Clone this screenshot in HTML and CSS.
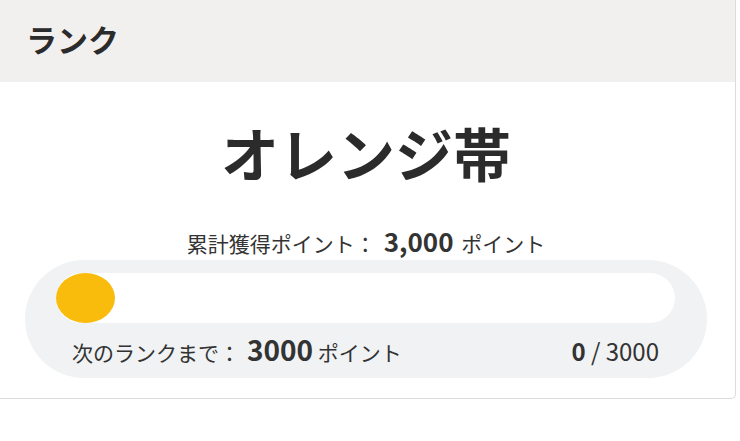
FILE: index.html
```html
<!DOCTYPE html>
<html lang="ja">

<head>
    <meta charset="UTF-8">
    <meta name="viewport" content="width=device-width, initial-scale=1.0">
    <title>ランク</title>
    <link rel="stylesheet" href="styles.css">
</head>

<body>
    <div class="card">
        <div class="card-header">
            <h2>ランク</h2>
        </div>
        <div class="card-body">
            <h1 class="rank-name">オレンジ帯</h1>
            <p class="total">累計獲得ポイント：<strong>3,000</strong> ポイント</p>
            <div class="progress-box">
                <div class="progress-track">
                    <div class="progress-fill" style="width: 59px;"></div>
                </div>
                <div class="progress-info">
                    <span class="next">次のランクまで：<strong>3000</strong> ポイント</span>
                    <span class="count"><strong>0</strong> / 3000</span>
                </div>
            </div>
        </div>
    </div>
</body>

</html>
```

FILE: styles.css
```css
body {
    font-family: "Noto Sans CJK JP", "Noto Sans", sans-serif;
    margin: 0;
    padding: 0;
    background-color: #fff;
    color: #333;
}

.card {
    width: 741px;
    margin-left: -5px;
    border-right: 1px solid #dcdcdc;
    border-bottom: 1px solid #dcdcdc;
    border-radius: 0 0 5px 0;
    background-color: #fff;
    box-sizing: border-box;
}

.card-header {
    height: 82px;
    box-sizing: border-box;
    background-color: #f1f0ee;
    padding: 0 0 5px 31px;
    display: flex;
    align-items: center;
}

.card-header h2 {
    margin: 0;
    font-size: 31px;
    font-weight: bold;
    color: #2b2b2b;
}

.card-body {
    padding: 35px 28px 20px 30px;
    text-align: center;
}

.rank-name {
    margin: 0;
    font-size: 58px;
    line-height: 70px;
    font-weight: bold;
    color: #2b2b2b;
}

.total {
    margin: 41px 0 2px;
    height: 30px;
    font-size: 21px;
    line-height: 30px;
}

.total strong {
    font-size: 26px;
    line-height: 1;
    margin: 0 3px 0 8px;
}

.progress-box {
    background-color: #f0f2f4;
    border-radius: 60px;
    padding: 13px 32px 12px 31px;
    text-align: left;
}

.progress-track {
    height: 50px;
    background-color: #fff;
    border-radius: 25px;
}

.progress-fill {
    height: 100%;
    background-color: #f9bb0c;
    border-radius: 50%;
}

.progress-info {
    display: flex;
    justify-content: space-between;
    align-items: center;
    height: 30px;
    margin-top: 13px;
    padding: 0 16px 0 16px;
    line-height: 30px;
}

.next {
    font-size: 21px;
}

.next strong {
    font-size: 28px;
    line-height: 1;
    margin-left: 7px;
}

.count {
    font-size: 24px;
}

.count strong {
    line-height: 1;
}
```
